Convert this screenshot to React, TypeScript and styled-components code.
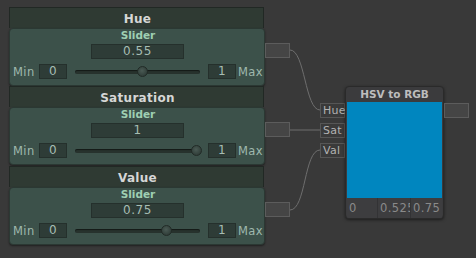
import React from "react";
import styled, { createGlobalStyle } from "styled-components";

const Global = createGlobalStyle`
  html, body { margin: 0; padding: 0; background: #393939; }
  body { font-family: "DejaVu Sans", "Liberation Sans", sans-serif; }
`;

const Canvas = styled.div`
  position: relative;
  width: 476px;
  height: 258px;
  overflow: hidden;
  background: #393939;
`;

const Wires = styled.svg`
  position: absolute;
  left: 0;
  top: 0;
  pointer-events: none;
`;

const SliderNode = styled.div<{ $x: number; $y: number }>`
  position: absolute;
  left: ${(p) => p.$x}px;
  top: ${(p) => p.$y}px;
  width: 256px;
  display: flex;
  flex-direction: column;
`;

const NodeHeader = styled.div`
  box-sizing: border-box;
  width: 255px;
  height: 21px;
  background: #2f3a33;
  border: 1px solid #212824;
  border-bottom: none;
  color: #d6d6d6;
  font-weight: bold;
  font-size: 12px;
  letter-spacing: 0.3px;
  display: flex;
  align-items: center;
  justify-content: center;
  padding-left: 2px;
  padding-top: 1px;
`;

const NodeBody = styled.div`
  box-sizing: border-box;
  width: 256px;
  height: 58px;
  background: #3c514a;
  border: 1px solid #2b3833;
  border-radius: 4px;
  box-shadow: 0 1px 2px rgba(0, 0, 0, 0.45);
  display: flex;
  flex-direction: column;
  align-items: center;
`;

const BodyTitle = styled.div`
  height: 13px;
  line-height: 12px;
  font-size: 10.5px;
  font-weight: bold;
  color: #9fcfb2;
  margin-left: 2px;
`;

const Field = styled.div<{ $w: number; $align?: string }>`
  box-sizing: border-box;
  width: ${(p) => p.$w}px;
  height: 15px;
  background: #2e3c37;
  border: 1px solid #25302c;
  color: #a6bdb3;
  font-size: 12px;
  letter-spacing: 0.6px;
  line-height: 13px;
  text-align: ${(p) => p.$align || "center"};
  padding: 0 2px;
`;

const ValueField = styled(Field)`
  margin-top: 2px;
  margin-left: 1px;
`;

const Row = styled.div`
  align-self: stretch;
  margin-top: 5px;
  padding-left: 3px;
  display: flex;
  align-items: center;
  height: 15px;
`;

const RowLabel = styled.span<{ $w?: number }>`
  font-size: 11.5px;
  letter-spacing: 0.4px;
  color: #9fb8ad;
  width: ${(p) => (p.$w ? `${p.$w}px` : "auto")};
`;

const Track = styled.div`
  position: relative;
  flex: 0 0 125px;
  height: 4px;
  margin: 0 8px;
  background: #27322d;
  border-radius: 2px;
  box-shadow: inset 0 1px 1px rgba(0, 0, 0, 0.5);
`;

const Thumb = styled.div`
  position: absolute;
  top: -4px;
  width: 11px;
  height: 11px;
  border-radius: 50%;
  background: radial-gradient(circle at 45% 40%, #4a5a54 0%, #35433e 60%, #2a3531 100%);
  border: 1px solid #222b27;
  box-sizing: border-box;
`;

const MaxLabel = styled(RowLabel)`
  margin-left: 2px;
`;

const Port = styled.div<{ $x: number; $y: number; $w?: number }>`
  position: absolute;
  left: ${(p) => p.$x}px;
  top: ${(p) => p.$y}px;
  box-sizing: border-box;
  width: ${(p) => p.$w || 25}px;
  height: 15px;
  background: #454545;
  border: 1px solid #5c5c5c;
`;

const InPort = styled(Port)`
  background: #3a3a3a;
  border-color: #565656;
  color: #b2b2b2;
  font-size: 11px;
  letter-spacing: 0.3px;
  line-height: 13px;
  padding-left: 2px;
`;

const HsvNode = styled.div`
  position: absolute;
  left: 345px;
  top: 86px;
  box-sizing: border-box;
  width: 99px;
  height: 133px;
  background: #3b3b3d;
  border: 1px solid #2a2a2a;
  border-radius: 4px;
  box-shadow: 0 1px 3px rgba(0, 0, 0, 0.5);
  display: flex;
  flex-direction: column;
  overflow: hidden;
`;

const HsvHeader = styled.div`
  height: 15px;
  line-height: 15px;
  text-align: center;
  font-size: 10.5px;
  font-weight: bold;
  color: #bdbdbd;
`;

const Swatch = styled.div<{ $c: string }>`
  height: 96px;
  margin: 0 1px;
  background: ${(p) => p.$c};
`;

const Cells = styled.div`
  display: flex;
  height: 20px;
  margin: 0 1px;
  background: #3d3d3f;
`;

const Cell = styled.div<{ $w: number }>`
  flex: 0 0 ${(p) => p.$w}px;
  box-sizing: border-box;
  overflow: hidden;
  white-space: nowrap;
  font-size: 11.5px;
  letter-spacing: 0.4px;
  line-height: 20px;
  color: #8a8a8a;
  padding-left: 2px;
  border-right: 1px solid #333335;
  &:last-child { border-right: none; }
`;

type SliderProps = { title: string; value: number; y: number };

const Slider = ({ title, value, y }: SliderProps) => (
  <>
    <SliderNode $x={9} $y={y}>
      <NodeHeader>{title}</NodeHeader>
      <NodeBody>
        <BodyTitle>Slider</BodyTitle>
        <ValueField $w={93}>{String(value)}</ValueField>
        <Row>
          <RowLabel $w={26}>Min</RowLabel>
          <Field $w={28}>0</Field>
          <Track>
            <Thumb style={{ left: 3 + value * 118 - 5.5 }} />
          </Track>
          <Field $w={28}>1</Field>
          <MaxLabel>Max</MaxLabel>
        </Row>
      </NodeBody>
    </SliderNode>
    <Port $x={265} $y={y + 36} />
  </>
);

export default function App() {
  return (
    <Canvas>
      <Global />
      <Wires width={476} height={258}>
        <path d="M290 50 C 305 50, 305 110, 320 110" stroke="#6e6e6e" strokeWidth={1} fill="none" />
        <path d="M290 130 L 320 130" stroke="#6e6e6e" strokeWidth={1} fill="none" />
        <path d="M290 210 C 306 210, 304 150, 320 150" stroke="#6e6e6e" strokeWidth={1} fill="none" />
      </Wires>
      <Slider title="Hue" value={0.55} y={7} />
      <Slider title="Saturation" value={1} y={86} />
      <Slider title="Value" value={0.75} y={166} />
      <InPort $x={320} $y={103} $w={25}>Hue</InPort>
      <InPort $x={320} $y={123} $w={25}>Sat</InPort>
      <InPort $x={320} $y={143} $w={25}>Val</InPort>
      <HsvNode>
        <HsvHeader>HSV to RGB</HsvHeader>
        <Swatch $c="#0086bf" />
        <Cells>
          <Cell $w={31}>0</Cell>
          <Cell $w={33}>0.525</Cell>
          <Cell $w={33}>0.75</Cell>
        </Cells>
      </HsvNode>
      <Port $x={444} $y={103} />
    </Canvas>
  );
}
